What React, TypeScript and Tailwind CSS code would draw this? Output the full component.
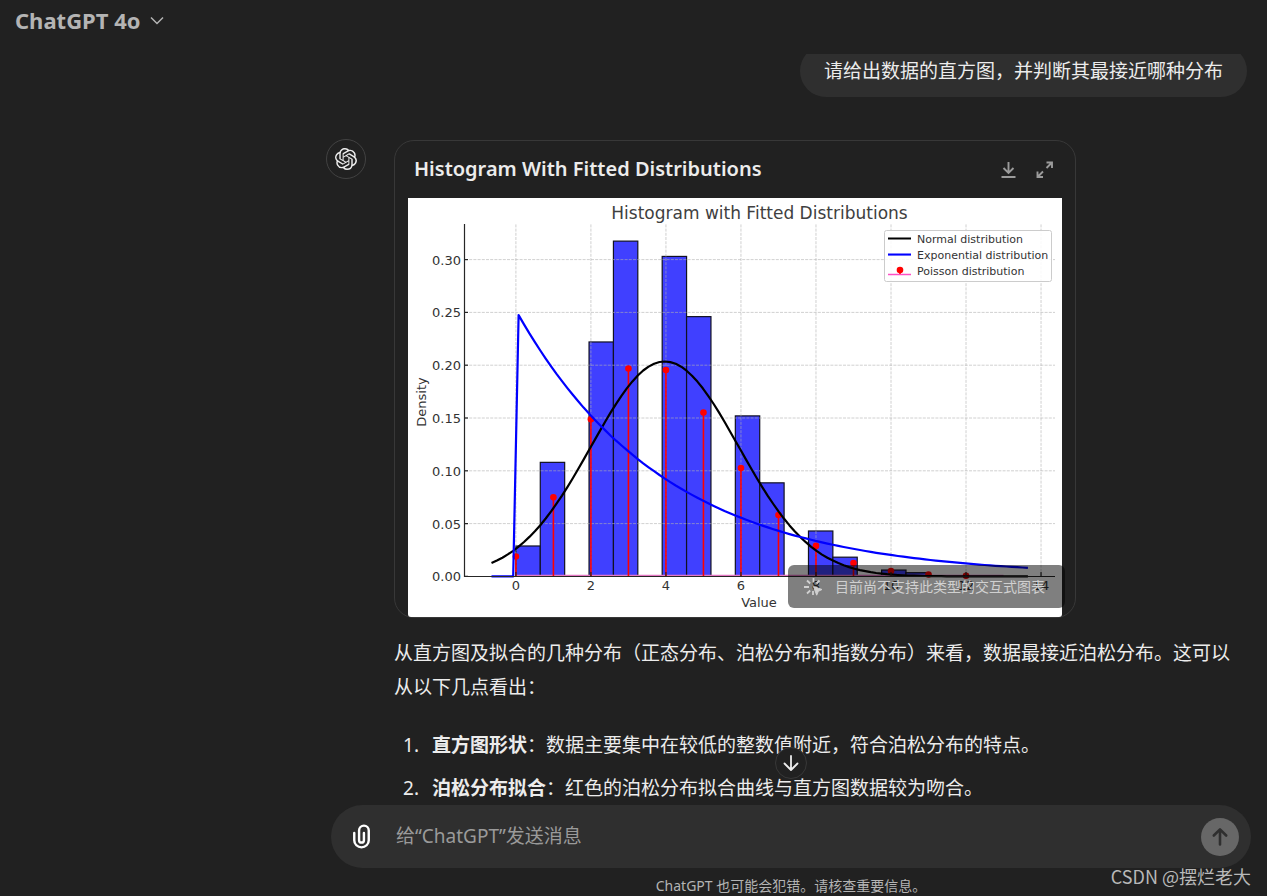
/**
 * Chat conversation view: model switcher, one user message, one assistant
 * answer with a histogram card, and the message composer.
 */

import { useState } from "react";
import { SiOpenai } from "react-icons/si";

// Plot area inside the 654x419 figure
const px = (v: number) => 107.9 + 37.51 * v;
const py = (d: number) => 378.4 - 1056 * d;

const BIN = 0.65;
const BARS = [
  { bin: 0,  h: 0.0288 },
  { bin: 1,  h: 0.108 },
  { bin: 3,  h: 0.222 },
  { bin: 4,  h: 0.3175 },
  { bin: 6,  h: 0.303 },
  { bin: 7,  h: 0.246 },
  { bin: 9,  h: 0.152 },
  { bin: 10, h: 0.0886 },
  { bin: 12, h: 0.043 },
  { bin: 13, h: 0.0182 },
  { bin: 15, h: 0.006 },
  { bin: 16, h: 0.0035 },
];

const X_TICKS = [0, 2, 4, 6, 8, 10, 12, 14];
const Y_TICKS = [0, 0.05, 0.1, 0.15, 0.2, 0.25, 0.3];

const MEAN = 3.97;
const STD = 1.96;
const LAMBDA = 0.252;

// 100 samples over [-0.65, 13.65]
const XS = Array.from({ length: 100 }, (_, i) => -0.65 + (14.3 * i) / 99);

const normal = (x: number) =>
  Math.exp(-((x - MEAN) ** 2) / (2 * STD * STD)) / (STD * Math.sqrt(2 * Math.PI));
const exponential = (x: number) => (x < 0 ? 0 : LAMBDA * Math.exp(-LAMBDA * x));

const toPoints = (fn: (x: number) => number) =>
  XS.map((x) => `${px(x).toFixed(1)},${py(fn(x)).toFixed(1)}`).join(" ");

function poisson(k: number) {
  let p = Math.exp(-MEAN);
  for (let i = 1; i <= k; i++) p *= MEAN / i;
  return p;
}

function HistogramChart() {
  return (
    <svg
      viewBox="0 0 654 419"
      role="img"
      aria-label="Histogram with Fitted Distributions"
      className="block w-full h-auto bg-white rounded-b-[3px] font-['DejaVu_Sans',sans-serif]"
    >
      {/* Bars */}
      {BARS.map(({ bin, h }) => (
        <rect
          key={bin}
          x={px(bin * BIN)}
          y={py(h)}
          width={BIN * 37.51}
          height={378.4 - py(h)}
          fill="#4040ff"
          stroke="#111122"
          strokeWidth="1.2"
        />
      ))}

      {/* Grid */}
      <g stroke="#b0b0b0" strokeOpacity="0.6" strokeWidth="1" strokeDasharray="3 1.2">
        {X_TICKS.map((v) => <line key={v} x1={px(v)} x2={px(v)} y1="378" y2="26" />)}
        {Y_TICKS.slice(1).map((d) => <line key={d} x1="57" x2="647" y1={py(d)} y2={py(d)} />)}
      </g>

      {/* Poisson stems */}
      <line x1={px(0)} x2={px(13)} y1="377.6" y2="377.6" stroke="#e377c2" strokeWidth="1.5" />
      {Array.from({ length: 13 }, (_, k) => (
        <g key={k}>
          <line x1={px(k)} x2={px(k)} y1="378" y2={py(poisson(k))} stroke="#ff0000" strokeWidth="1.6" />
          <circle cx={px(k)} cy={py(poisson(k))} r="3.3" fill="#ff0000" />
        </g>
      ))}

      {/* Curves */}
      <polyline points={toPoints(normal)} fill="none" stroke="#000000" strokeWidth="2.2" strokeLinejoin="round" />
      <polyline points={toPoints(exponential)} fill="none" stroke="#0000ff" strokeWidth="2.2" strokeLinejoin="round" />

      {/* Axes */}
      <g stroke="#262626" strokeWidth="1.2">
        <line x1="56.5" x2="56.5" y1="26" y2="379" />
        <line x1="56" x2="647" y1="378.5" y2="378.5" />
        {X_TICKS.map((v) => <line key={v} x1={px(v)} x2={px(v)} y1="378" y2="374" />)}
        {Y_TICKS.map((d) => <line key={d} x1="57" x2="60" y1={py(d)} y2={py(d)} />)}
      </g>

      <g fill="#333333" fontSize="13">
        {Y_TICKS.map((d) => (
          <text key={d} x="53" y={py(d) + 5} textAnchor="end">{d.toFixed(2)}</text>
        ))}
        {X_TICKS.map((v) => (
          <text key={v} x={px(v)} y="392" textAnchor="middle">{v}</text>
        ))}
        <text x="351" y="409" textAnchor="middle">Value</text>
        <text transform="translate(18 204) rotate(-90)" textAnchor="middle">Density</text>
      </g>
      <text x="351.5" y="21" textAnchor="middle" fill="#404040" fontSize="17">
        Histogram with Fitted Distributions
      </text>

      {/* Legend */}
      <rect x="476.5" y="32.5" width="167" height="51" rx="2" fill="#ffffff" fillOpacity="0.85" stroke="#cccccc" />
      <line x1="480" x2="503" y1="40.5" y2="40.5" stroke="#000000" strokeWidth="2.2" />
      <line x1="480" x2="503" y1="56.5" y2="56.5" stroke="#0000ff" strokeWidth="2.2" />
      <line x1="480" x2="503" y1="76.5" y2="76.5" stroke="#ff4fc4" strokeWidth="1.5" />
      <line x1="492" x2="492" y1="76" y2="72" stroke="#ff0000" strokeWidth="1.5" />
      <circle cx="492" cy="72" r="3.3" fill="#ff0000" />
      <g fill="#333333" fontSize="11">
        <text x="509" y="45">Normal distribution</text>
        <text x="509" y="61">Exponential distribution</text>
        <text x="509" y="77">Poisson distribution</text>
      </g>
    </svg>
  );
}

function DownloadIcon() {
  return (
    <svg width="20" height="20" viewBox="0 0 20 20" fill="none" stroke="currentColor" strokeWidth="1.9">
      <path d="M9.500 2v11M4.500 8l5 5 5-5M2.500 17h14" />
    </svg>
  );
}

function ExpandIcon() {
  return (
    <svg width="20" height="20" viewBox="0 0 20 20" fill="none" stroke="currentColor" strokeWidth="1.9">
      <path d="M11.500 2.500h5.500v5.500M16.500 3l-5 5M8 17H2.500v-5.500M3 16.500l5-5" />
    </svg>
  );
}

function SparkCursorIcon() {
  return (
    <svg width="20" height="20" viewBox="0 0 20 20" fill="none" stroke="currentColor" strokeWidth="1.8" className="shrink-0">
      <path d="M9.500 1v4.500M3 3.500l3.200 3M15.500 3.500l-3 3M0 10h5M3 16.500l3.200-3M9 14v4" />
      <path d="M9.500 9.500l8.500 3-3.700 1.800-1.600 3.900z" fill="currentColor" strokeWidth="1" strokeLinejoin="round" />
    </svg>
  );
}

function PaperclipIcon() {
  return (
    <svg width="29" height="29" viewBox="0 0 24 24" fill="currentColor">
      <path d="M9 7a5 5 0 0 1 10 0v8a7 7 0 1 1-14 0V9a1 1 0 0 1 2 0v6a5 5 0 0 0 10 0V7a3 3 0 1 0-6 0v8a1 1 0 1 0 2 0V9a1 1 0 1 1 2 0v6a3 3 0 1 1-6 0z" />
    </svg>
  );
}

function ChartCard() {
  return (
    <div className="relative w-[682px] max-w-full rounded-[20px] border border-[#383838]">
      <div className="h-[57px] flex items-center justify-between pl-[19px] pr-5">
        <h2 className="pb-0.5 text-[20px] font-semibold text-[#ececec]">Histogram With Fitted Distributions</h2>
        <div className="flex gap-4 text-[#9b9b9b]">
          <button type="button" aria-label="Download"><DownloadIcon /></button>
          <button type="button" aria-label="Expand"><ExpandIcon /></button>
        </div>
      </div>
      <div className="px-[13px]">
        <HistogramChart />
      </div>

      {/* Notice over the chart */}
      <div className="absolute right-[10px] bottom-[9px] h-[43px] pl-4 pr-5 flex items-center gap-[11px] rounded-md bg-black/50 text-[#d0d0d0]">
        <SparkCursorIcon />
        <span className="text-[14px]">目前尚不支持此类型的交互式图表</span>
      </div>
    </div>
  );
}

function Composer() {
  const [message, setMessage] = useState("");

  return (
    <form
      onSubmit={(e) => e.preventDefault()}
      className="h-[63px] rounded-full bg-[#2f2f2f] flex items-center pl-4 pr-3"
    >
      <button type="button" aria-label="Attach file" className="text-white shrink-0">
        <PaperclipIcon />
      </button>
      <input
        type="text"
        aria-label="Message"
        value={message}
        onChange={(e) => setMessage(e.target.value)}
        placeholder="给“ChatGPT”发送消息"
        className="flex-1 min-w-0 ml-5 bg-transparent text-[19px] text-[#ececec] placeholder:text-[#9a9a9a] outline-none"
      />
      <button
        type="submit"
        aria-label="Send"
        className="size-[38px] shrink-0 rounded-full bg-[#676767] text-[#2f2f2f] flex items-center justify-center"
      >
        <svg width="20" height="20" viewBox="0 0 20 20" fill="none" stroke="currentColor" strokeWidth="2.6" strokeLinecap="round" strokeLinejoin="round">
          <path d="M10 17.500V2.500M3.800 8.500L10 2.300l6.200 6.200" />
        </svg>
      </button>
    </form>
  );
}

export default function App() {
  return (
    <div className="relative h-screen overflow-hidden flex flex-col bg-[#212121] text-[#ececec] font-['Noto_Sans','Noto_Sans_CJK_SC',sans-serif]">
      <header className="h-[54px] shrink-0 px-[15px]">
        <button type="button" className="h-10 flex items-center gap-2 text-[#b4b4b4]">
          <span className="text-[22px] font-bold">ChatGPT 4o</span>
          <svg width="16" height="16" viewBox="0 0 16 16" fill="none" stroke="currentColor" strokeWidth="1.500">
            <path d="M2 5.500l6 6 6-6" />
          </svg>
        </button>
      </header>

      {/* Conversation */}
      <main className="flex-1 min-h-0 overflow-hidden pl-[326px] pr-5">
        <div className="-mt-[9px] flex justify-end">
          <p className="rounded-[26px] bg-[#2f2f2f] px-6 py-[9px] text-[19px] leading-[34px]">
            请给出数据的直方图，并判断其最接近哪种分布
          </p>
        </div>

        <div className="mt-[42px] flex gap-7">
          <div className="size-10 shrink-0 rounded-full border border-[#424242] flex items-center justify-center">
            <SiOpenai size={22} />
          </div>
          <div className="flex-1 min-w-0 pt-px">
            <ChartCard />
            <p className="mt-[18px] text-[19px] leading-[34px]">
              从直方图及拟合的几种分布（正态分布、泊松分布和指数分布）来看，数据最接近泊松分布。这可以从以下几点看出：
            </p>
            <ol className="mt-6 flex flex-col gap-[9px] list-decimal pl-[30px] text-[19px] leading-[34px]">
              <li className="pl-2"><strong>直方图形状</strong>：数据主要集中在较低的整数值附近，符合泊松分布的特点。</li>
              <li className="pl-2"><strong>泊松分布拟合</strong>：红色的泊松分布拟合曲线与直方图数据较为吻合。</li>
            </ol>
          </div>
        </div>
      </main>

      {/* Composer and footnote */}
      <footer className="relative shrink-0 ml-[331px] mr-4">
        <button
          type="button"
          aria-label="Scroll to bottom"
          className="absolute left-1/2 -translate-x-1/2 -top-[58px] size-8 rounded-full border border-[#383838] bg-[#212121] flex items-center justify-center"
        >
          <svg width="18" height="18" viewBox="0 0 18 18" fill="none" stroke="currentColor" strokeWidth="1.800" strokeLinecap="round" strokeLinejoin="round">
            <path d="M9 2v14M2.500 9.500L9 16l6.500-6.500" />
          </svg>
        </button>
        <Composer />
        <p className="pt-2 text-center text-[14px] leading-5 text-[#b4b4b4]">
          ChatGPT 也可能会犯错。请核查重要信息。
        </p>
      </footer>

      {/* Watermark */}
      <span className="absolute right-4 bottom-2 text-[18px] leading-6 text-[#b8b8b8] font-['Noto_Sans_CJK_SC',sans-serif]">
        CSDN @摆烂老大
      </span>
    </div>
  );
}
